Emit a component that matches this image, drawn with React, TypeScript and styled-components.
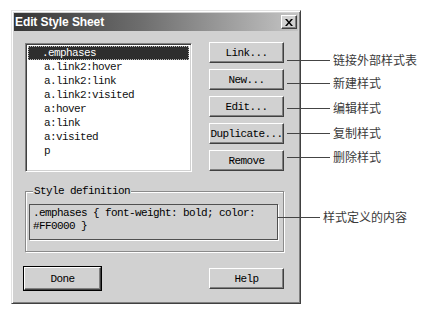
import styled, { createGlobalStyle } from "styled-components";

const GlobalStyle = createGlobalStyle`
  body {
    margin: 0;
    background: #ffffff;
    font-family: "Liberation Sans", Arial, sans-serif;
  }
`;

const face = "#d1d1d1";
const mono = `"Liberation Mono", "DejaVu Sans Mono", monospace`;

const Page = styled.div`
  display: flex;
  align-items: flex-start;
  padding: 10px 0 0 11px;
`;

const Dialog = styled.div`
  width: 290px;
  box-sizing: border-box;
  padding: 2px;
  background: ${face};
  border: 1px solid;
  border-color: #e2e2e2 #404040 #404040 #e2e2e2;
  box-shadow: inset 1px 1px 0 #ffffff, inset -1px -1px 0 #808080;
`;

const TitleBar = styled.div`
  height: 18px;
  display: flex;
  align-items: center;
  justify-content: space-between;
  padding: 0 1px 0 1px;
  background: linear-gradient(to right, #353535 0%, #6e6e6e 45%, #c4c4c4 100%);
`;

const Title = styled.span`
  color: #ffffff;
  font-weight: bold;
  font-size: 12px;
  letter-spacing: -0.1px;
`;

const CloseButton = styled.div`
  width: 16px;
  height: 14px;
  box-sizing: border-box;
  background: ${face};
  border: 1px solid;
  border-color: #ffffff #404040 #404040 #ffffff;
  box-shadow: inset -1px -1px 0 #808080;
  display: flex;
  align-items: center;
  justify-content: center;
`;

const Body = styled.div`
  padding: 12px 14px 11px 11px;
`;

const TopRow = styled.div`
  display: flex;
  justify-content: space-between;
  align-items: flex-start;
`;

const ListBox = styled.div`
  width: 167px;
  height: 129px;
  box-sizing: border-box;
  background: #ffffff;
  border: 1px solid;
  border-color: #808080 #ffffff #ffffff #808080;
  box-shadow: inset 1px 1px 0 #404040, inset -1px -1px 0 ${face};
  padding: 2px 2px 0 2px;
`;

const ListItem = styled.div<{ $selected?: boolean }>`
  height: 14px;
  line-height: 14px;
  box-sizing: border-box;
  padding-left: ${(p) => (p.$selected ? "14px" : "16px")};
  font-family: ${mono};
  font-size: 11px;
  letter-spacing: -0.6px;
  white-space: pre;
  color: ${(p) => (p.$selected ? "#ffffff" : "#111111")};
  background: ${(p) => (p.$selected ? "#2e2e2e" : "transparent")};
  outline: ${(p) => (p.$selected ? "1px dotted #bbbbbb" : "none")};
  outline-offset: -1px;
`;

const ButtonColumn = styled.div`
  display: flex;
  flex-direction: column;
  gap: 6px;
  margin-top: -1px;
`;

const Button = styled.div<{ $default?: boolean }>`
  width: ${(p) => (p.$default ? "77px" : "75px")};
  height: ${(p) => (p.$default ? "23px" : "21px")};
  box-sizing: border-box;
  display: flex;
  align-items: center;
  justify-content: center;
  background: ${face};
  border: 1px solid;
  border-color: #ffffff #404040 #404040 #ffffff;
  box-shadow: inset -1px -1px 0 #808080;
  outline: ${(p) => (p.$default ? "1px solid #000000" : "none")};
  outline-offset: 0;
  font-family: ${mono};
  font-size: 11px;
  letter-spacing: -0.6px;
  color: #000000;
  white-space: pre;
`;

const Group = styled.fieldset`
  margin: 13px 0 0 0;
  padding: 7px 5px 11px 3px;
  border: 1px solid #8a8a8a;
  box-shadow: 1px 1px 0 #ffffff, inset 1px 1px 0 #ffffff;
`;

const Legend = styled.legend`
  padding: 0 1px;
  margin-left: 4px;
  background: ${face};
  font-family: ${mono};
  font-size: 11px;
  letter-spacing: -0.6px;
  line-height: 12px;
  color: #000000;
`;

const DefinitionBox = styled.div`
  height: 36px;
  box-sizing: border-box;
  border: 1px solid #505050;
  box-shadow: 1px 1px 0 #ffffff;
  padding: 2px 3px;
  font-family: ${mono};
  font-size: 11px;
  letter-spacing: -0.6px;
  line-height: 13px;
  color: #000000;
`;

const Footer = styled.div`
  display: flex;
  justify-content: space-between;
  align-items: center;
  margin: 15px 0 0 -1px;
`;

const Callouts = styled.div`
  display: flex;
  flex-direction: column;
  margin-left: -14px;
  position: relative;
  z-index: 1;
`;

const Callout = styled.div<{ $top: number; $shift?: number }>`
  display: flex;
  align-items: center;
  height: 16px;
  margin-top: ${(p) => p.$top}px;
  margin-left: ${(p) => -(p.$shift ?? 0)}px;
`;

const Leader = styled.div`
  width: 43px;
  height: 1px;
  background: #444444;
`;

const Label = styled.span`
  margin-left: 3px;
  font-family: "Noto Sans CJK SC", "Liberation Sans", sans-serif;
  font-size: 12px;
  line-height: 16px;
  color: #3a3a3a;
  white-space: nowrap;
`;

const rules = [
  ".emphases",
  "a.link2:hover",
  "a.link2:link",
  "a.link2:visited",
  "a:hover",
  "a:link",
  "a:visited",
  "p",
];

const actions = ["Link...", "New...", "Edit...", "Duplicate...", "Remove"];

const notes = [
  { text: "链接外部样式表", top: 42 },
  { text: "新建样式", top: 7 },
  { text: "编辑样式", top: 9 },
  { text: "复制样式", top: 9 },
  { text: "删除样式", top: 8 },
  { text: "样式定义的内容", top: 44, shift: 10 },
];

const App = () => {
  return (
    <Page>
      <GlobalStyle />
      <Dialog>
        <TitleBar>
          <Title>Edit Style Sheet</Title>
          <CloseButton>
            <svg width="8" height="7" viewBox="0 0 8 7">
              <path d="M0 0h2l2 2.5L6 0h2L5 3.5 8 7H6L4 4.5 2 7H0l3-3.5z" fill="#000" />
            </svg>
          </CloseButton>
        </TitleBar>
        <Body>
          <TopRow>
            <ListBox>
              {rules.map((r, i) => (
                <ListItem key={r} $selected={i === 0}>
                  {r}
                </ListItem>
              ))}
            </ListBox>
            <ButtonColumn>
              {actions.map((a) => (
                <Button key={a}>{a}</Button>
              ))}
            </ButtonColumn>
          </TopRow>
          <Group>
            <Legend>Style definition</Legend>
            <DefinitionBox>
              .emphases {"{"} font-weight: bold; color:
              <br />
              #FF0000 {"}"}
            </DefinitionBox>
          </Group>
          <Footer>
            <Button $default>Done</Button>
            <Button>Help</Button>
          </Footer>
        </Body>
      </Dialog>
      <Callouts>
        {notes.map((n) => (
          <Callout key={n.text} $top={n.top} $shift={n.shift}>
            <Leader />
            <Label>{n.text}</Label>
          </Callout>
        ))}
      </Callouts>
    </Page>
  );
};

export default App;
